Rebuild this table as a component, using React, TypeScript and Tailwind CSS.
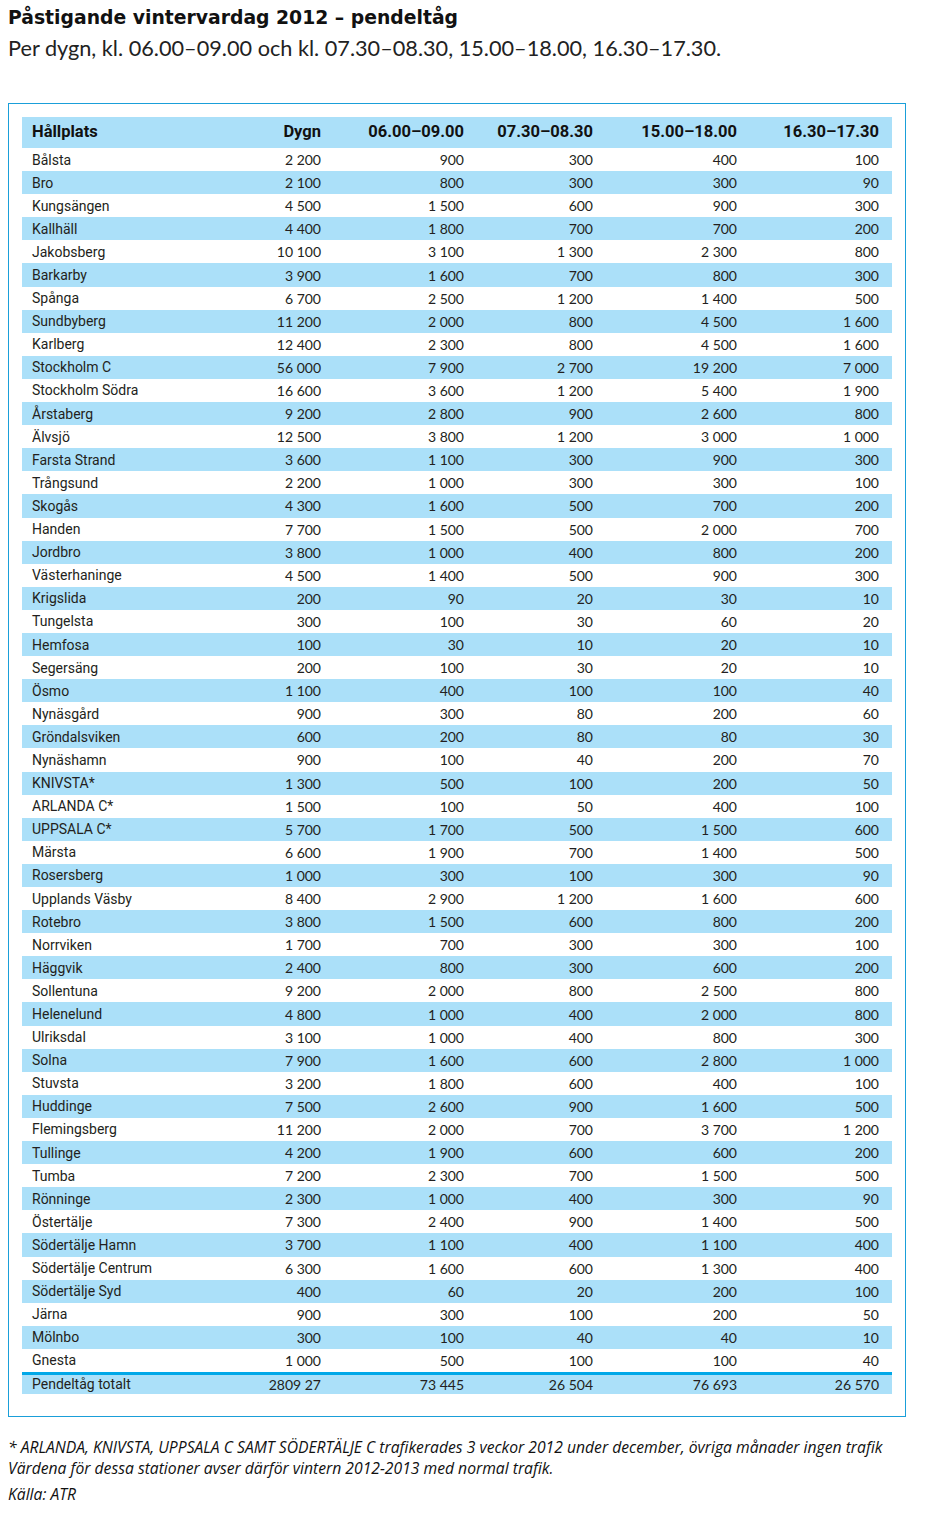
import React from "react";

type Row = [string, string, string, string, string, string];

const rows: Row[] = [
  ["Bålsta", "2 200", "900", "300", "400", "100"],
  ["Bro", "2 100", "800", "300", "300", "90"],
  ["Kungsängen", "4 500", "1 500", "600", "900", "300"],
  ["Kallhäll", "4 400", "1 800", "700", "700", "200"],
  ["Jakobsberg", "10 100", "3 100", "1 300", "2 300", "800"],
  ["Barkarby", "3 900", "1 600", "700", "800", "300"],
  ["Spånga", "6 700", "2 500", "1 200", "1 400", "500"],
  ["Sundbyberg", "11 200", "2 000", "800", "4 500", "1 600"],
  ["Karlberg", "12 400", "2 300", "800", "4 500", "1 600"],
  ["Stockholm C", "56 000", "7 900", "2 700", "19 200", "7 000"],
  ["Stockholm Södra", "16 600", "3 600", "1 200", "5 400", "1 900"],
  ["Årstaberg", "9 200", "2 800", "900", "2 600", "800"],
  ["Älvsjö", "12 500", "3 800", "1 200", "3 000", "1 000"],
  ["Farsta Strand", "3 600", "1 100", "300", "900", "300"],
  ["Trångsund", "2 200", "1 000", "300", "300", "100"],
  ["Skogås", "4 300", "1 600", "500", "700", "200"],
  ["Handen", "7 700", "1 500", "500", "2 000", "700"],
  ["Jordbro", "3 800", "1 000", "400", "800", "200"],
  ["Västerhaninge", "4 500", "1 400", "500", "900", "300"],
  ["Krigslida", "200", "90", "20", "30", "10"],
  ["Tungelsta", "300", "100", "30", "60", "20"],
  ["Hemfosa", "100", "30", "10", "20", "10"],
  ["Segersäng", "200", "100", "30", "20", "10"],
  ["Ösmo", "1 100", "400", "100", "100", "40"],
  ["Nynäsgård", "900", "300", "80", "200", "60"],
  ["Gröndalsviken", "600", "200", "80", "80", "30"],
  ["Nynäshamn", "900", "100", "40", "200", "70"],
  ["KNIVSTA*", "1 300", "500", "100", "200", "50"],
  ["ARLANDA C*", "1 500", "100", "50", "400", "100"],
  ["UPPSALA C*", "5 700", "1 700", "500", "1 500", "600"],
  ["Märsta", "6 600", "1 900", "700", "1 400", "500"],
  ["Rosersberg", "1 000", "300", "100", "300", "90"],
  ["Upplands Väsby", "8 400", "2 900", "1 200", "1 600", "600"],
  ["Rotebro", "3 800", "1 500", "600", "800", "200"],
  ["Norrviken", "1 700", "700", "300", "300", "100"],
  ["Häggvik", "2 400", "800", "300", "600", "200"],
  ["Sollentuna", "9 200", "2 000", "800", "2 500", "800"],
  ["Helenelund", "4 800", "1 000", "400", "2 000", "800"],
  ["Ulriksdal", "3 100", "1 000", "400", "800", "300"],
  ["Solna", "7 900", "1 600", "600", "2 800", "1 000"],
  ["Stuvsta", "3 200", "1 800", "600", "400", "100"],
  ["Huddinge", "7 500", "2 600", "900", "1 600", "500"],
  ["Flemingsberg", "11 200", "2 000", "700", "3 700", "1 200"],
  ["Tullinge", "4 200", "1 900", "600", "600", "200"],
  ["Tumba", "7 200", "2 300", "700", "1 500", "500"],
  ["Rönninge", "2 300", "1 000", "400", "300", "90"],
  ["Östertälje", "7 300", "2 400", "900", "1 400", "500"],
  ["Södertälje Hamn", "3 700", "1 100", "400", "1 100", "400"],
  ["Södertälje Centrum", "6 300", "1 600", "600", "1 300", "400"],
  ["Södertälje Syd", "400", "60", "20", "200", "100"],
  ["Järna", "900", "300", "100", "200", "50"],
  ["Mölnbo", "300", "100", "40", "40", "10"],
  ["Gnesta", "1 000", "500", "100", "100", "40"],
];

const nameFont = "font-['Roboto',sans-serif]";
const numFont = "font-['Lato',sans-serif]";

function DataRow({ r, blue }: { r: Row; blue: boolean }) {
  return (
    <div
      className={`flex h-[23.1px] items-center text-[14px] text-[#231f20] ${
        blue ? "bg-[#abe0f9]" : "bg-white"
      }`}
    >
      <div className={`w-[200px] pl-[10px] pt-[1px] ${nameFont}`}>{r[0]}</div>
      <div className={`w-[99px] text-right ${numFont}`}>{r[1]}</div>
      <div className={`w-[143px] text-right ${numFont}`}>{r[2]}</div>
      <div className={`w-[129px] text-right ${numFont}`}>{r[3]}</div>
      <div className={`w-[144px] text-right ${numFont}`}>{r[4]}</div>
      <div className={`w-[142px] text-right ${numFont}`}>{r[5]}</div>
    </div>
  );
}

export default function App() {
  return (
    <div className="w-[939px] h-[1522px] bg-white text-[#1a1a1a]">
      <div className="pl-[8px] pt-[4px]">
        <h1 className="font-['DejaVu_Sans',sans-serif] font-bold text-[18.8px] leading-[27px] text-[#111]">
          Påstigande vintervardag 2012 – pendeltåg
        </h1>
        <p className="font-['Lato',sans-serif] text-[21.7px] leading-[34px] text-[#222]">
          Per dygn, kl. 06.00–09.00 och kl. 07.30–08.30, 15.00–18.00, 16.30–17.30.
        </p>
      </div>

      <div className="ml-[8px] mt-[38px] w-[898px] border border-[#1a9fd9] pt-[13px] pb-[22px] pl-[13px]">
        <div className="w-[870px]">
          <div className="flex h-[31px] items-center bg-[#abe0f9] font-['Roboto',sans-serif] font-bold text-[16.5px] text-[#111]">
            <div className="w-[200px] pl-[10px]">Hållplats</div>
            <div className="w-[99px] text-right">Dygn</div>
            <div className="w-[143px] text-right">06.00–09.00</div>
            <div className="w-[129px] text-right">07.30–08.30</div>
            <div className="w-[144px] text-right">15.00–18.00</div>
            <div className="w-[142px] text-right">16.30–17.30</div>
          </div>
          {rows.map((r, i) => (
            <DataRow key={r[0]} r={r} blue={i % 2 === 1} />
          ))}
          <div className="h-[3px] bg-[#00a8e8]" />
          <div className="flex h-[19px] items-center bg-[#abe0f9] text-[14px] text-[#231f20]">
            <div className={`w-[200px] pl-[10px] pt-[1px] ${nameFont}`}>Pendeltåg totalt</div>
            <div className={`w-[99px] text-right ${numFont}`}>2809 27</div>
            <div className={`w-[143px] text-right ${numFont}`}>73 445</div>
            <div className={`w-[129px] text-right ${numFont}`}>26 504</div>
            <div className={`w-[144px] text-right ${numFont}`}>76 693</div>
            <div className={`w-[142px] text-right ${numFont}`}>26 570</div>
          </div>
        </div>
      </div>

      <div className="pl-[8px] pt-[20px] font-['Open_Sans',sans-serif] italic text-[15.7px] leading-[21px] text-[#111]">
        <p>
          * ARLANDA, KNIVSTA, UPPSALA C SAMT SÖDERTÄLJE C trafikerades 3 veckor 2012 under december, övriga månader ingen trafik
        </p>
        <p>Värdena för dessa stationer avser därför vintern 2012-2013 med normal trafik.</p>
        <p className="mt-[5px]">Källa: ATR</p>
      </div>
    </div>
  );
}
